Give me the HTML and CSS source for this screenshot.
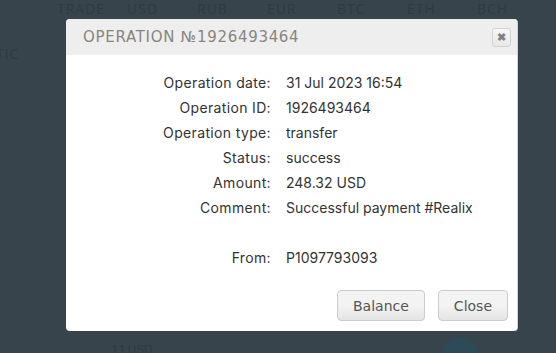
FILE: index.html
```html
<!DOCTYPE html>
<html lang="en">
<head>
    <meta charset="UTF-8">
    <title>Operation</title>
    <link rel="stylesheet" href="styles.css">
</head>
<body>
<div class="page">
    <div class="topbar">
        <span>TRADE</span><span>USD</span><span>RUB</span><span>EUR</span><span>BTC</span><span>ETH</span><span>BCH</span>
    </div>
    <div class="side">TIC</div>
    <div class="bottom">
        <span class="sum">1.1 USD</span>
        <span class="dot"></span>
    </div>
</div>

<div class="overlay">
    <div class="modal">
        <div class="modal-head">
            <h2>Operation №1926493464</h2>
            <button class="x" type="button">&#10006;</button>
        </div>
        <div class="modal-body">
            <div class="row"><span class="lbl">Operation date:</span><span class="val">31 Jul 2023 16:54</span></div>
            <div class="row"><span class="lbl">Operation ID:</span><span class="val">1926493464</span></div>
            <div class="row"><span class="lbl">Operation type:</span><span class="val">transfer</span></div>
            <div class="row"><span class="lbl">Status:</span><span class="val">success</span></div>
            <div class="row"><span class="lbl">Amount:</span><span class="val">248.32 USD</span></div>
            <div class="row"><span class="lbl">Comment:</span><span class="val">Successful payment #Realix</span></div>
            <div class="row"><span class="lbl"></span><span class="val"></span></div>
            <div class="row"><span class="lbl">From:</span><span class="val">P1097793093</span></div>
        </div>
        <div class="modal-foot">
            <button type="button">Balance</button>
            <button type="button">Close</button>
        </div>
    </div>
</div>
</body>
</html>
```

FILE: styles.css
```css
body {
    margin: 0;
    background-color: #37444c;
    font-family: "Inter", sans-serif;
    overflow: hidden;
}
.page {
    height: 353px;
    position: relative;
    overflow: hidden;
    color: #2e3a41;
}
.topbar {
    display: flex;
    padding-left: 57px;
    font-family: "Open Sans", sans-serif;
    font-size: 14px;
    letter-spacing: 1px;
    line-height: 18px;
}
.topbar span {
    width: 70px;
}
.side {
    position: absolute;
    left: -4px;
    top: 44px;
    font-family: "Open Sans", sans-serif;
    font-size: 14px;
    letter-spacing: 1px;
}
.bottom .sum {
    position: absolute;
    left: 112px;
    top: 342px;
    font-size: 12px;
}
.bottom .dot {
    position: absolute;
    left: 442px;
    top: 338px;
    width: 36px;
    height: 36px;
    border-radius: 50%;
    background: #2c4a57;
}
.overlay {
    position: absolute;
    left: 0;
    top: 0;
    width: 556px;
    height: 353px;
}
.modal {
    position: absolute;
    left: 66px;
    top: 19px;
    width: 451px;
    background: #fff;
    border-right: 1px solid #cfd3d5;
    border-radius: 4px;
    overflow: hidden;
}
.modal-head {
    display: flex;
    align-items: center;
    justify-content: space-between;
    background: #eeeeee;
    height: 36px;
    padding: 0 6px 0 17px;
}
.modal-head h2 {
    margin: 0;
    font-family: "DejaVu Sans", sans-serif;
    font-weight: normal;
    font-size: 15px;
    letter-spacing: 0.7px;
    text-transform: uppercase;
    color: #8a847d;
}
.x {
    width: 19px;
    height: 19px;
    padding: 0;
    border: 1px solid #d2d2d2;
    border-radius: 3px;
    background: linear-gradient(#f7f7f7, #e8e8e8);
    color: #808080;
    font-size: 11px;
    font-weight: bold;
    line-height: 17px;
}
.modal-body {
    padding: 15px 0 8px;
}
.row {
    display: flex;
    height: 25px;
    align-items: center;
    font-size: 14px;
    color: #333;
}
.lbl {
    width: 205px;
    text-align: right;
    padding-right: 15px;
    letter-spacing: 0.35px;
}
.val {
    flex: 1;
}
.modal-foot {
    display: flex;
    justify-content: flex-end;
    gap: 13px;
    padding: 12px 9px 10px;
}
.modal-foot button {
    height: 31px;
    padding: 0 15px;
    border: 1px solid #cccccc;
    border-radius: 4px;
    background: linear-gradient(#f3f3f3 50%, #e4e4e4);
    font-family: "DejaVu Sans", sans-serif;
    font-size: 14px;
    color: #555;
}
```
